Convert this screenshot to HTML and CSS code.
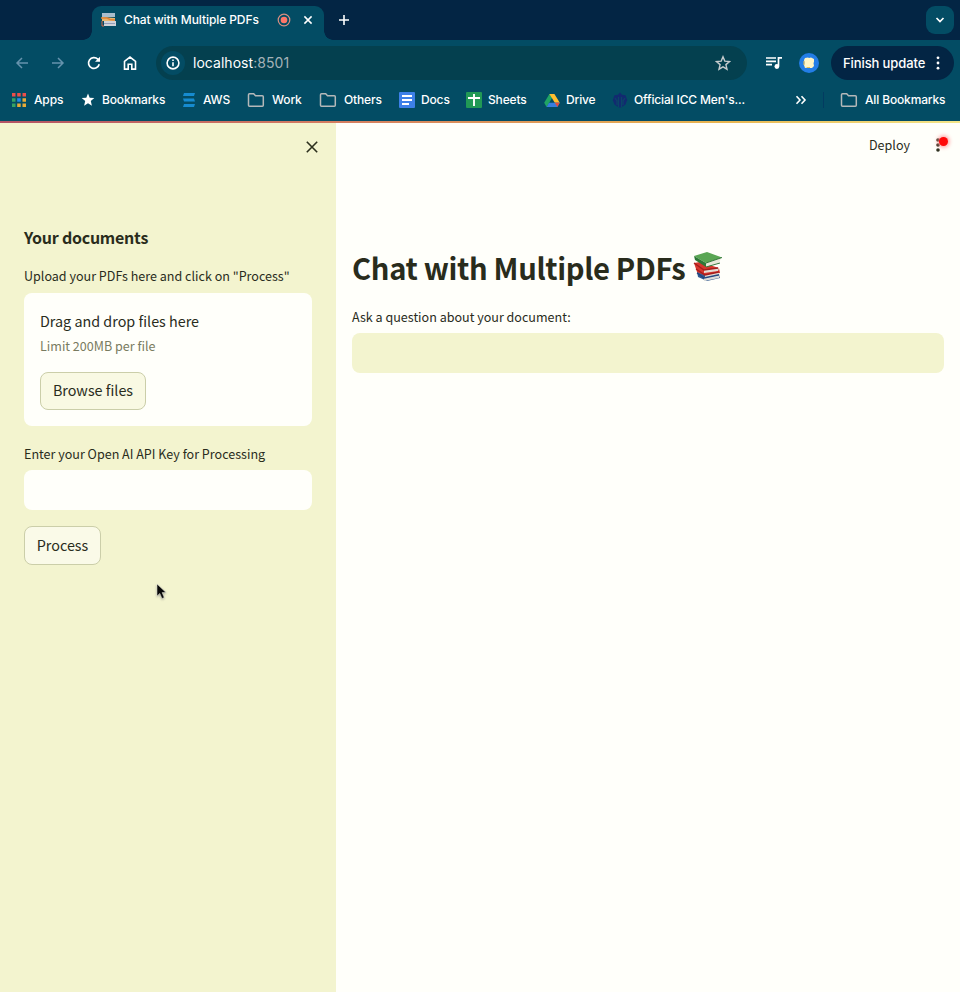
FILE: index.html
```html
<!DOCTYPE html>
<html lang="en">
<head>
<meta charset="utf-8">
<title>Chat with Multiple PDFs</title>
<link rel="stylesheet" href="styles.css">
</head>
<body>
<svg class="defs" width="0" height="0">
  <symbol id="folder" viewBox="0 0 18 16"><path d="M1.5 13.2V2.7q0-1 1-1h4.2l1.8 2h6.8q1 0 1 1v8.5q0 1-1 1H2.5q-1 0-1-1z" fill="none" stroke="#b5b8b9" stroke-width="1.5"/></symbol>
  <symbol id="books" viewBox="0 0 30 30">
    <path d="M4 20l5-2 17 4 1 4-13 3-9-4z" fill="#315a91"/><path d="M11 26l16-3-1 3-15 3z" fill="#dcdcd8"/><path d="M4 21l7 5 15-3" fill="none" stroke="#23457c" stroke-width="1.2"/>
    <path d="M1 11l6-1 19 6 1 5-14 3-9-4z" fill="#d7372d"/><path d="M11 18l15-2-1 3-14 2z" fill="#e4ddd4"/><path d="M12 23l14-3v2l-14 3z" fill="#e4ddd4"/><path d="M1 11l10 7 14-2M3 17l9 6 14-3" fill="none" stroke="#a61e1c" stroke-width="1.3"/>
    <path d="M1 4L14 0l15 5.5L13 11z" fill="#5aa653"/><path d="M1 4l12 7v4L2 8z" fill="#2d7837"/><path d="M13 11l15-5-2 5-13 4z" fill="#e8e9d9"/><path d="M13 11l16-5.5M13 15l14-4" fill="none" stroke="#34783b"/>
  </symbol>
</svg>
<header class="browser">
  <div class="tabstrip">
    <div class="tab">
      <svg class="favicon" width="16" height="16" viewBox="0 0 16 16"><path d="M1 1h13v4H1z" fill="#a8bdcc"/><path d="M1 5l13 1v3H1z" fill="#e8b66d"/><path d="M3 9h12v5H3z" fill="#cfd2d8"/><path d="M0 6h6l3 1.5 5 .5" fill="none" stroke="#e18436" stroke-width="1.5"/><path d="M1 9v5h2" fill="none" stroke="#cf6448"/><path d="M3 11.5h11" stroke="#949eb9"/></svg>
      <span class="tab-title">Chat with Multiple PDFs</span>
      <svg class="recording" width="14" height="14" viewBox="0 0 14 14"><circle cx="7" cy="7" r="5.8" fill="none" stroke="#d98f82" stroke-width="1.2"/><circle cx="7" cy="7" r="3.3" fill="#ff7668"/></svg>
      <svg class="tab-close" width="10" height="10" viewBox="0 0 10 10"><path d="M1.4 1.4l7.2 7.2m0-7.2L1.4 8.6" stroke="#fff" stroke-width="1.5"/></svg>
    </div>
    <svg class="new-tab" width="12" height="12" viewBox="0 0 12 12"><path d="M6 1v10M1 6h10" stroke="#fff" stroke-width="1.6"/></svg>
    <div class="tab-search"><svg width="10" height="8" viewBox="0 0 10 8"><path d="M1.5 2L5 5.5 8.5 2" fill="none" stroke="#fff" stroke-width="1.7"/></svg></div>
  </div>
  <div class="toolbar">
    <div class="nav">
      <svg width="16" height="16" viewBox="0 0 16 16"><path d="M14 8H3m5-5L3 8l5 5" fill="none" stroke="#6693ad" stroke-width="1.5"/></svg>
      <svg width="16" height="16" viewBox="0 0 16 16"><path d="M2 8h11M8 3l5 5-5 5" fill="none" stroke="#6693ad" stroke-width="1.5"/></svg>
      <svg width="16" height="16" viewBox="0 0 16 16"><path d="M13.2 9.2A5.4 5.4 0 1 1 11.8 4.2L13 5.5" fill="none" stroke="#fff" stroke-width="1.7"/><path d="M14 1.8v5H9z" fill="#fff"/></svg>
      <svg width="16" height="16" viewBox="0 0 16 16"><path d="M2.5 6.3L8 2l5.5 4.3v7.8H9.8V9.3H6.2v4.8H2.5z" fill="none" stroke="#fff" stroke-width="1.6"/></svg>
    </div>
    <div class="address">
      <span class="site-info"><svg width="14" height="14" viewBox="0 0 14 14"><circle cx="7" cy="7" r="5.9" fill="none" stroke="#fff" stroke-width="1.6"/><path d="M7 6.2v4M7 3.4v1.5" stroke="#fff" stroke-width="1.6"/></svg></span>
      <span class="url">localhost<span class="port">:8501</span></span>
      <svg class="star" width="16" height="16" viewBox="0 0 16 16"><path d="M8 1.8l1.8 4.3 4.7.4-3.6 3.1 1.1 4.6L8 11.8l-4 2.4 1.1-4.6-3.6-3.1 4.7-.4z" fill="none" stroke="#c5cbcd" stroke-width="1.4"/></svg>
    </div>
    <svg class="queue" width="16" height="14" viewBox="0 0 16 14"><path d="M0 2h10M0 5.3h10M0 8.7h6M12.5 10V1.9H16" fill="none" stroke="#fff" stroke-width="1.7"/><circle cx="10.9" cy="10.5" r="2.4" fill="#fff"/></svg>
    <svg class="avatar" width="20" height="20" viewBox="0 0 20 20"><circle cx="10" cy="10" r="10" fill="#237de6"/><path d="M6 5l3-.5 1 .5 2-.5 3 1.5v3l-.5 1 .5 3-2 2h-3l-1-.5-3 .5-1-3 .5-2-.5-3z" fill="#fff5c5"/><path d="M5 8v4M8 14.5h3" stroke="#e6bf55"/></svg>
    <div class="update"><span>Finish update</span><svg width="4" height="14" viewBox="0 0 4 14"><g fill="#fff"><circle cx="2" cy="1.8" r="1.4"/><circle cx="2" cy="7" r="1.4"/><circle cx="2" cy="12.2" r="1.4"/></g></svg></div>
  </div>
  <nav class="bookmarks">
    <div class="bm apps"><svg width="14" height="14" viewBox="0 0 14 14"><path d="M0 0h3.5v3.5H0zM5.2 0h3.5v3.5H5.2zM10.5 0H14v3.5h-3.5z" fill="#ec4e49"/><path d="M0 5.2h3.5v3.5H0zM0 10.4h3.5v3.5H0z" fill="#35a264"/><path d="M5.2 5.2h3.5v3.5H5.2z" fill="#248be9"/><path d="M10.5 5.2H14v3.5h-3.5zM5.2 10.4h3.5v3.5H5.2zM10.5 10.4H14v3.5h-3.5z" fill="#e8ab38"/></svg><span>Apps</span></div>
    <div class="bm"><svg width="14" height="14" viewBox="0 0 14 14"><path d="M7 .5l1.7 4.3 4.6.3-3.5 3 1.1 4.6L7 10.2l-3.9 2.5 1.1-4.6-3.5-3 4.6-.3z" fill="#fff"/></svg><span>Bookmarks</span></div>
    <div class="bm"><svg width="14" height="16" viewBox="0 0 14 16"><path d="M2 1h11l-1 3H1zM1 6.5h11l1 3H2zM2 12h11l-1 3H1z" fill="#168bd0"/></svg><span>AWS</span></div>
    <div class="bm wide"><svg width="18" height="16"><use href="#folder"/></svg><span>Work</span></div>
    <div class="bm wide"><svg width="18" height="16"><use href="#folder"/></svg><span>Others</span></div>
    <div class="bm file"><svg width="16" height="16" viewBox="0 0 16 16"><rect width="16" height="16" rx="1" fill="#3d80e8"/><path d="M3 4h10M3 8h10M3 12h7" stroke="#fff" stroke-width="1.9"/></svg><span>Docs</span></div>
    <div class="bm file"><svg width="16" height="16" viewBox="0 0 16 16"><rect width="16" height="16" rx="1" fill="#219955"/><path d="M2 6h12M8 2v12" stroke="#fff" stroke-width="1.9"/></svg><span>Sheets</span></div>
    <div class="bm"><svg width="16" height="14" viewBox="0 0 16 14"><path d="M5.4 1h5L5.1 10 2.6 14 .2 9.7z" fill="#20a464"/><path d="M10.4 1l5.4 8.7h-5L5.4 1z" fill="#ffbd2e"/><path d="M5 9.7h10.8L13.4 14H2.6z" fill="#377ddd"/><path d="M10.8 9.7h5L13.4 14z" fill="#e44c3c"/></svg><span>Drive</span></div>
    <div class="bm"><svg width="16" height="16" viewBox="0 0 16 16"><path d="M8 .5l2 2.2 3.5.6L15.2 8l-1.8 4.7L9 15.5H7l-4.4-2.8L.8 8l1.7-4.7L6 2.7z" fill="#122a70"/><path d="M6.5 5v10M9.5 5v10M3 6l2 3v4m8-7l-2 3v4" fill="none" stroke="#0b4667" stroke-width="1.2"/></svg><span>Official ICC Men's...</span></div>
    <svg class="more" width="12" height="10" viewBox="0 0 12 10"><path d="M1.5 1.3L5 5 1.5 8.7M6.5 1.3L10 5 6.5 8.7" fill="none" stroke="#fff" stroke-width="1.6"/></svg>
    <i class="divider"></i>
    <div class="bm wide"><svg width="18" height="16"><use href="#folder"/></svg><span>All Bookmarks</span></div>
  </nav>
</header>
<div class="decoration"></div>
<div class="app">
  <aside class="sidebar">
    <svg class="sidebar-close" width="12" height="12" viewBox="0 0 12 12"><path d="M.8.8l10.4 10.4m0-10.4L.8 11.2" stroke="#2c2f1d" stroke-width="1.6"/></svg>
    <h2>Your documents</h2>
    <label class="upload-label">Upload your PDFs here and click on "Process"</label>
    <section class="dropzone">
      <div class="drop-title">Drag and drop files here</div>
      <div class="limit">Limit 200MB per file</div>
      <button class="browse">Browse files</button>
    </section>
    <label class="key-label">Enter your Open AI API Key for Processing</label>
    <div class="field key"></div>
    <button class="process">Process</button>
  </aside>
  <main>
    <div class="app-header"><span>Deploy</span><div class="menu"><svg width="4" height="14" viewBox="0 0 4 14"><g fill="#303221"><circle cx="2" cy="2" r="1.8"/><circle cx="2" cy="7" r="1.8"/><circle cx="2" cy="12" r="1.8"/></g></svg><i class="alert"></i></div></div>
    <div class="content">
      <h1><span>Chat with Multiple PDFs</span><svg width="30" height="30"><use href="#books"/></svg></h1>
      <label>Ask a question about your document:</label>
      <div class="field question"></div>
    </div>
  </main>
</div>
<svg class="cursor" width="12" height="18" viewBox="0 0 12 18"><path d="M1 1v12l2.8-2.6L6 15.5l2.2-1L6.1 9.6H10z" fill="#080808" stroke="#e9e9df" stroke-width=".5"/></svg>
</body>
</html>
```
FILE: styles.css
```css
* { box-sizing: border-box; }
body { margin: 0; width: 960px; height: 992px; overflow: hidden; background: #fffffa; color: #292c1c; font-family: "Noto Sans CJK SC", "Noto Sans", sans-serif; }
svg { display: block; flex: none; }
.defs { position: absolute; }
h1, h2 { margin: 0; }
button { font: inherit; color: inherit; padding: 0; }
span, label { white-space: nowrap; }
.browser { height: 121px; background: #034c64; color: #fff; font: 500 12.5px/16px Inter, sans-serif; }
.tabstrip { display: flex; height: 40px; background: #032544; }
.tab { position: relative; display: flex; align-items: center; width: 232px; height: 34px; margin: 6px 0 0 92px; padding: 0 10px 6px 9px; border-radius: 9px 9px 0 0; background: #034c64; }
.tab::before, .tab::after { content: ""; position: absolute; bottom: 0; width: 9px; height: 9px; }
.tab::before { left: -9px; background: radial-gradient(circle at 0 0, transparent 8.5px, #034c64 9px); }
.tab::after { right: -9px; background: radial-gradient(circle at 100% 0, transparent 8.5px, #034c64 9px); }
.tab-title { width: 138px; margin-left: 7px; font-size: 12px; letter-spacing: -.08px; }
.recording { margin-left: 15px; }
.tab-close { margin-left: 12px; }
.new-tab { margin: 14px 0 0 14px; }
.tab-search { display: grid; place-items: center; width: 28px; height: 28px; margin: 6px 6px 0 auto; border-radius: 9px; background: #034c64; }
.toolbar { display: flex; align-items: center; height: 46px; }
.nav { display: flex; gap: 20px; width: 156px; padding-left: 14px; }
.address { display: flex; align-items: center; width: 591px; height: 34px; border-radius: 17px; padding: 0 16px 0 5px; background: #04404f; }
.site-info { display: grid; place-items: center; width: 24px; height: 24px; border-radius: 50%; background: #034c64; }
.url { margin-left: 8px; font-size: 14px; font-weight: 400; letter-spacing: .04px; }
.port { color: #a4b2b7; }
.star { margin-left: auto; }
.queue { margin-left: 19px; }
.avatar { margin-left: 17px; }
.update { display: flex; align-items: center; justify-content: space-between; width: 123px; height: 34px; margin-left: 12px; padding: 0 14px 0 12px; border-radius: 17px; background: #032544; font-size: 13px; letter-spacing: -.1px; }
.bookmarks { display: grid; grid-template-columns: 69px 101px 65px 72px 78px 68px 79px 68px 183px 28px 17px 106px; align-items: center; height: 28px; padding-left: 12px; font-size: 12px; letter-spacing: -.15px; }
.bm { display: grid; grid-template-columns: 22px max-content; align-items: center; }
.bm:nth-child(2) { grid-template-columns: 21px max-content; }
.bm:nth-child(3) { grid-template-columns: 21px max-content; }
.bm.wide { grid-template-columns: 25px max-content; }
.bm.file { grid-template-columns: 22px max-content; padding-left: 2px; }
.bm.file + .bm.file { padding-left: 1px; }
.divider { width: 1px; height: 16px; background: #033b60; }
.decoration { height: 2px; background: linear-gradient(90deg, #b25365, #d47d60 35%, #e8b54f 75%, #f3e689); }
.app { display: flex; height: 869px; }
.sidebar { display: flex; flex-direction: column; align-items: stretch; width: 336px; padding: 18px 24px; background: #f3f4cf; }
.sidebar-close { align-self: flex-end; margin-right: -6px; }
h2 { margin-top: 71px; font-size: 16px; line-height: 26px; font-weight: 700; letter-spacing: -.25px; }
label { display: block; font-size: 12.55px; line-height: 20px; }
.upload-label { margin-top: 16px; }
.dropzone { height: 133px; margin-top: 7px; padding: 16px; border-radius: 8px; background: #fffffa; }
.drop-title { font-size: 14.35px; line-height: 24px; }
.limit { margin-top: 2px; color: #797b60; font-size: 12.55px; line-height: 21px; }
button { border: 1px solid #cbcea9; border-radius: 8px; background: #fafae8; font-size: 14.35px; line-height: 24px; }
.browse { display: block; width: 106px; height: 38px; margin-top: 16px; padding-bottom: 2px; background: #f9f9e3; }
.key-label { margin-top: 18px; }
.field { height: 40px; border-radius: 8px; }
.key { margin-top: 6px; background: #fffffa; }
.process { width: 77px; height: 39px; margin-top: 16px; padding-bottom: 2px; }
main { width: 624px; background: #fffffa; }
.app-header { display: flex; justify-content: flex-end; padding: 12px 20px 0 0; font-size: 12.55px; line-height: 20px; }
.menu { position: relative; margin-left: 26px; padding-top: 3px; }
.alert { position: absolute; left: 3px; top: 2px; width: 9px; height: 9px; border-radius: 50%; background: #ff0808; box-shadow: 0 0 4px 1px #ff898c; }
.content { padding: 83px 16px 0; }
h1 { display: flex; align-items: center; gap: 8px; height: 58px; font-size: 29.2px; line-height: 44px; letter-spacing: -.35px; }
h1 svg { margin-top: -1px; }
.content label { margin-top: 11px; }
.question { margin-top: 6px; background: #f3f4cf; }
.cursor { position: absolute; left: 156px; top: 583px; filter: drop-shadow(0 1px 1px #7779); }
```
